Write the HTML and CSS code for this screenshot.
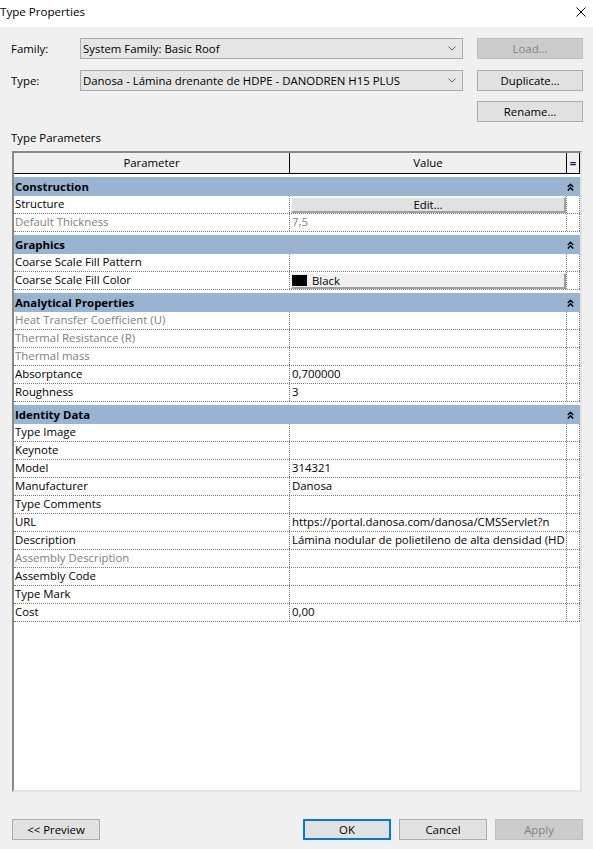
FILE: index.html
```html
<!DOCTYPE html>
<html>
<head>
<meta charset="utf-8">
<link rel="stylesheet" href="styles.css">
</head>
<body>
<div class="titlebar">
  <span class="title">Type Properties</span>
  <svg class="close" width="10" height="10" viewBox="0 0 10 10"><path d="M0.5 0.5 L9.5 9.5 M9.5 0.5 L0.5 9.5" stroke="#000" stroke-width="1" fill="none"/></svg>
</div>
<div class="props">
  <div class="prop-row r1">
    <span class="plabel">Family:</span>
    <div class="combo"><span>System Family: Basic Roof</span><svg class="chev" width="8" height="5" viewBox="0 0 8 5"><path d="M0.5 0.5 L4 4 L7.5 0.5" stroke="#606060" stroke-width="1" fill="none"/></svg></div>
    <div class="btn disabled">Load…</div>
  </div>
  <div class="prop-row r2">
    <span class="plabel">Type:</span>
    <div class="combo"><span>Danosa - Lámina drenante de HDPE - DANODREN H15 PLUS</span><svg class="chev" width="8" height="5" viewBox="0 0 8 5"><path d="M0.5 0.5 L4 4 L7.5 0.5" stroke="#606060" stroke-width="1" fill="none"/></svg></div>
    <div class="btn">Duplicate…</div>
  </div>
  <div class="prop-row r3">
    <span></span><span></span>
    <div class="btn">Rename…</div>
  </div>
</div>
<div class="tp-label">Type Parameters</div>
<div class="grid">
  <div class="ghead">
    <div class="hc">Parameter</div>
    <div class="hc">Value</div>
    <div class="hc eq">=</div>
  </div>

  <div class="section"><span>Construction</span><svg class="collapse" width="7" height="8" viewBox="0 0 7 8"><path d="M0.8 4 L3.5 1.2 L6.2 4 M0.8 7.6 L3.5 4.8 L6.2 7.6" stroke="#000" stroke-width="1.4" fill="none"/></svg></div>
  <div class="prow"><div class="pc">Structure</div><div class="vc"><div class="cellbtn center">Edit…</div></div><div class="ec"></div></div>
  <div class="prow dis"><div class="pc">Default Thickness</div><div class="vc">7,5</div><div class="ec"></div></div>

  <div class="section"><span>Graphics</span><svg class="collapse" width="7" height="8" viewBox="0 0 7 8"><path d="M0.8 4 L3.5 1.2 L6.2 4 M0.8 7.6 L3.5 4.8 L6.2 7.6" stroke="#000" stroke-width="1.4" fill="none"/></svg></div>
  <div class="prow"><div class="pc">Coarse Scale Fill Pattern</div><div class="vc"></div><div class="ec"></div></div>
  <div class="prow"><div class="pc">Coarse Scale Fill Color</div><div class="vc"><div class="cellbtn color"><span class="swatch"></span>Black</div></div><div class="ec"></div></div>

  <div class="section"><span>Analytical Properties</span><svg class="collapse" width="7" height="8" viewBox="0 0 7 8"><path d="M0.8 4 L3.5 1.2 L6.2 4 M0.8 7.6 L3.5 4.8 L6.2 7.6" stroke="#000" stroke-width="1.4" fill="none"/></svg></div>
  <div class="prow dis"><div class="pc">Heat Transfer Coefficient (U)</div><div class="vc"></div><div class="ec"></div></div>
  <div class="prow dis"><div class="pc">Thermal Resistance (R)</div><div class="vc"></div><div class="ec"></div></div>
  <div class="prow dis"><div class="pc">Thermal mass</div><div class="vc"></div><div class="ec"></div></div>
  <div class="prow"><div class="pc">Absorptance</div><div class="vc">0,700000</div><div class="ec"></div></div>
  <div class="prow"><div class="pc">Roughness</div><div class="vc">3</div><div class="ec"></div></div>

  <div class="section"><span>Identity Data</span><svg class="collapse" width="7" height="8" viewBox="0 0 7 8"><path d="M0.8 4 L3.5 1.2 L6.2 4 M0.8 7.6 L3.5 4.8 L6.2 7.6" stroke="#000" stroke-width="1.4" fill="none"/></svg></div>
  <div class="prow"><div class="pc">Type Image</div><div class="vc"></div><div class="ec"></div></div>
  <div class="prow"><div class="pc">Keynote</div><div class="vc"></div><div class="ec"></div></div>
  <div class="prow"><div class="pc">Model</div><div class="vc">314321</div><div class="ec"></div></div>
  <div class="prow"><div class="pc">Manufacturer</div><div class="vc">Danosa</div><div class="ec"></div></div>
  <div class="prow"><div class="pc">Type Comments</div><div class="vc"></div><div class="ec"></div></div>
  <div class="prow"><div class="pc">URL</div><div class="vc">https://portal.danosa.com/danosa/CMSServlet?n</div><div class="ec"></div></div>
  <div class="prow"><div class="pc">Description</div><div class="vc">Lámina nodular de polietileno de alta densidad (HD</div><div class="ec"></div></div>
  <div class="prow dis"><div class="pc">Assembly Description</div><div class="vc"></div><div class="ec"></div></div>
  <div class="prow"><div class="pc">Assembly Code</div><div class="vc"></div><div class="ec"></div></div>
  <div class="prow"><div class="pc">Type Mark</div><div class="vc"></div><div class="ec"></div></div>
  <div class="prow"><div class="pc">Cost</div><div class="vc">0,00</div><div class="ec"></div></div>
</div>
<div class="footer">
  <div class="btn fbtn">&lt;&lt; Preview</div>
  <div class="fgroup">
    <div class="btn fbtn default">OK</div>
    <div class="btn fbtn">Cancel</div>
    <div class="btn fbtn disabled">Apply</div>
  </div>
</div>
</body>
</html>
```
FILE: styles.css
```css
* { box-sizing: border-box; }
html, body { margin: 0; padding: 0; }
body {
  width: 593px;
  height: 849px;
  overflow: hidden;
  background: #f0f0f0;
  font-family: "Open Sans", "Liberation Sans", sans-serif;
  font-size: 11.4px;
  color: #000;
}
.titlebar {
  height: 27px;
  background: #fff;
  display: flex;
  align-items: center;
  justify-content: space-between;
  padding: 0 7px 4px 0;
}
.title { font-size: 11.6px; }
.close { display: block; }

.props { padding: 11px 10px 0 11px; }
.prop-row {
  display: grid;
  grid-template-columns: 69px 383px 120px;
  height: 21px;
  align-items: center;
}
.prop-row .btn { margin-left: 14px; }
.r2 { margin-top: 11px; }
.r3 { margin-top: 10px; }
.combo {
  height: 21px;
  border: 1px solid #acacac;
  background: #e5e5e5;
  display: flex;
  align-items: center;
  justify-content: space-between;
  padding: 0 6px 0 2px;
}
.btn {
  height: 21px;
  border: 1px solid #adadad;
  background: #e1e1e1;
  display: flex;
  align-items: center;
  justify-content: center;
}
.btn.disabled {
  background: #cccccc;
  border-color: #bfbfbf;
  color: #838383;
}
.btn.default { border: 2px solid #0078d7; }

.tp-label { margin: 8px 0 0 11px; line-height: 16px; }

.grid {
  margin: 5px 0 0 12px;
  width: 570px;
  height: 641px;
  background: #fff;
  border-style: solid;
  border-width: 2px;
  border-color: #8a8a8a #e3e3e3 #e3e3e3 #8a8a8a;
}
.ghead, .prow {
  display: grid;
  grid-template-columns: 276px 277px 13px;
}
.ghead {
  height: 21px;
  background: #f0f0f0;
  border-bottom: 1px solid #000;
}
.hc {
  border-right: 1px solid #000;
  text-align: center;
  line-height: 20px;
}
.hc.eq { color: #1a1a4a; font-weight: bold; }

.section {
  margin-top: 3px;
  height: 19px;
  background: #99b4d1;
  display: flex;
  align-items: center;
  justify-content: space-between;
  padding: 0 6px 1px 1px;
  font-weight: bold;
}
.collapse { display: block; margin-top: 1px; }

.prow {
  height: 18px;
  border-bottom: 1px dotted #7a7a7a;
  line-height: 16px;
}
.pc, .vc, .ec { border-right: 1px dotted #7a7a7a; white-space: nowrap; overflow: hidden; }
.pc { padding-left: 1px; }
.vc { padding-left: 2px; }
.prow.dis { color: #808080; }

.vc:has(.cellbtn) { padding: 1px 0 0 1px; }
.cellbtn {
  height: 16px;
  border-style: solid;
  border-width: 1px 2px 2px 1px;
  border-color: #f8f8f8 #a0a0a0 #a0a0a0 #f8f8f8;
  line-height: 13px;
  display: flex;
  align-items: center;
}
.cellbtn.center { justify-content: center; background: #e1e1e1; }
.cellbtn.color { background: #f0f0f0; padding-left: 0; }
.swatch {
  width: 15px;
  height: 11px;
  background: #000;
  margin-right: 5px;
}

.footer {
  margin-top: 27px;
  display: flex;
  justify-content: space-between;
  padding: 0 10px 0 12px;
}
.fgroup { display: flex; gap: 8px; }
.fbtn { width: 88px; }
```
